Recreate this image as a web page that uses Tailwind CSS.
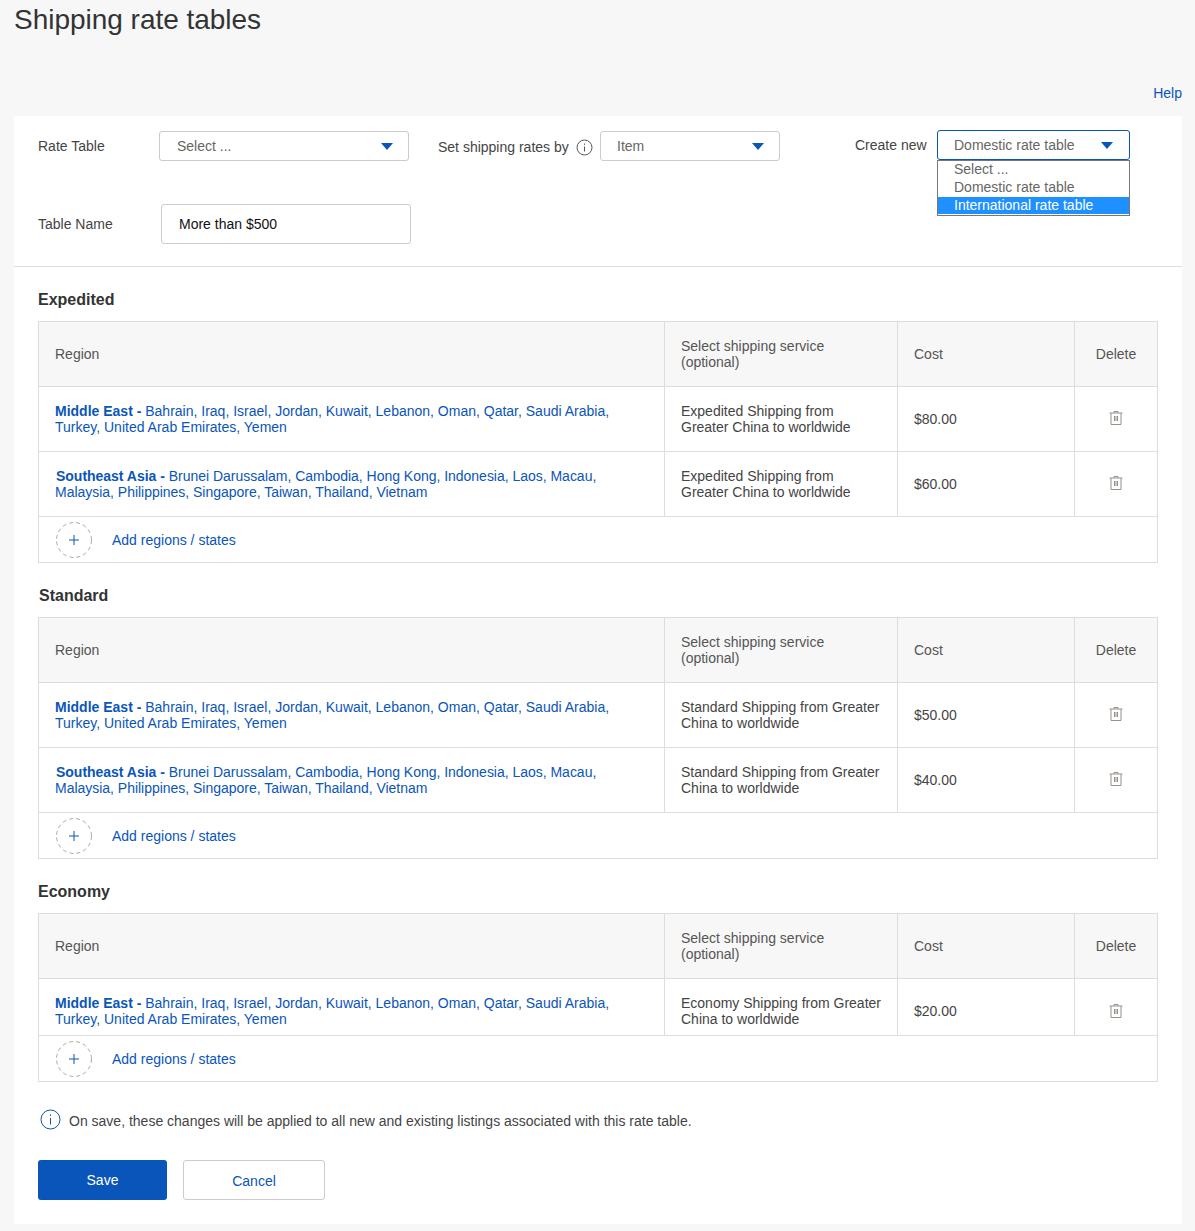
<!DOCTYPE html>
<html lang="en">
<head>
    <meta charset="UTF-8">
    <meta name="viewport" content="width=device-width, initial-scale=1.0">
    <title>Shipping rate tables</title>
    <script src="https://cdn.jsdelivr.net/npm/@tailwindcss/browser@4"></script>
</head>
<body class="bg-[#f7f7f7] font-['Liberation_Sans',Arial,sans-serif] text-[14px] leading-[16px] text-[#444]">
    <div class="h-[1231px] overflow-hidden">
        <h1 class="pl-[14px] pt-[3px] h-[84px] text-[28px] leading-[34px] tracking-[-0.02px] text-[#333]">Shipping rate tables</h1>
        <div class="h-[32px] pr-[13px] pt-[1px] text-right text-[#0a55b9]">Help</div>

        <div class="ml-[14px] mr-[13px] h-[1108px] bg-white">
            <!-- filters -->
            <div class="h-[151px] border-b border-[#ddd] pl-[24px]">
                <div class="relative flex h-[88px] items-start">
                    <span class="mt-[22px] w-[121px]">Rate Table</span>
                    <div class="mt-[15px] flex h-[30px] w-[250px] items-center justify-between rounded-[3px] border border-[#ccc] pl-[17px] pr-[15px] text-[#666]">
                        <span>Select ...</span>
                        <svg width="12" height="7" viewBox="0 0 12 7"><path d="M0 0h12L6 7z" fill="#0a55b9"/></svg>
                    </div>
                    <span class="ml-[29px] mt-[23px] w-[130px] whitespace-nowrap">Set shipping rates by</span>
                    <svg class="ml-[8px] mt-[23px]" width="17" height="17" viewBox="0 0 17 17" fill="none" stroke="#555"><circle cx="8.500" cy="8.500" r="7.500"/><path d="M8.500 7.500v5M8.500 4.500v1.400"/></svg>
                    <div class="ml-[7px] mt-[15px] flex h-[30px] w-[180px] items-center justify-between rounded-[3px] border border-[#ccc] pl-[16px] pr-[15px] text-[#666]">
                        <span>Item</span>
                        <svg width="12" height="7" viewBox="0 0 12 7"><path d="M0 0h12L6 7z" fill="#0a55b9"/></svg>
                    </div>
                    <span class="ml-[75px] mt-[21px] w-[82px]">Create new</span>
                    <div class="relative mt-[14px]">
                        <div class="flex h-[30px] w-[193px] items-center justify-between rounded-[3px] border border-[#0a55b9] pl-[16px] pr-[16px] text-[#666]">
                            <span>Domestic rate table</span>
                            <svg width="12" height="7" viewBox="0 0 12 7"><path d="M0 0h12L6 7z" fill="#0a55b9"/></svg>
                        </div>
                        <div class="absolute left-0 top-[30px] w-[193px] h-[56px] border border-[#767676] bg-white text-[#666]">
                            <div class="h-[18px] pl-[16px]">Select ...</div>
                            <div class="h-[18px] pl-[16px]">Domestic rate table</div>
                            <div class="h-[17px] bg-[#1e90ff] pl-[16px] text-white">International rate table</div>
                        </div>
                    </div>
                </div>
                <div class="flex h-[40px] items-center">
                    <span class="w-[123px]">Table Name</span>
                    <div class="flex h-[40px] w-[250px] items-center rounded-[3px] border border-[#ccc] pl-[17px] text-[#111]">More than $500</div>
                </div>
            </div>

            <!-- Expedited -->
            <section class="pl-[24px] pr-[24px]">
                <h2 class="flex h-[54px] items-end pb-[13px] text-[16px] font-bold text-[#333]">Expedited</h2>
                <div class="border border-[#ddd]">
                    <div class="grid h-[64px] grid-cols-[625px_233px_177px_1fr] bg-[#f7f7f7] text-[#555]">
                        <div class="flex items-center pl-[16px]">Region</div>
                        <div class="flex items-center border-l border-[#ddd] pl-[16px]">Select shipping service<br>(optional)</div>
                        <div class="flex items-center border-l border-[#ddd] pl-[16px]">Cost</div>
                        <div class="flex items-center justify-center border-l border-[#ddd]">Delete</div>
                    </div>
                    <div class="grid h-[65px] grid-cols-[625px_233px_177px_1fr] border-t border-[#ddd]">
                        <div class="flex items-center pl-[16px] text-[#0a55b9]"><p><b>Middle East - </b>Bahrain, Iraq, Israel, Jordan, Kuwait, Lebanon, Oman, Qatar, Saudi Arabia,<br>Turkey, United Arab Emirates, Yemen</p></div>
                        <div class="flex items-center border-l border-[#ddd] pl-[16px]">Expedited Shipping from<br>Greater China to worldwide</div>
                        <div class="flex items-center border-l border-[#ddd] pl-[16px]">$80.00</div>
                        <div class="flex items-center justify-center border-l border-[#ddd] pb-[3px]">
                            <svg width="14" height="15" viewBox="0 0 14 15" fill="none" stroke="#9a9088"><path d="M.5 3h13M2 3v11.500h10V3M5 3V1.500h4V3M5.500 6v5M7 6v5M8.500 6v5"/></svg>
                        </div>
                    </div>
                    <div class="grid h-[65px] grid-cols-[625px_233px_177px_1fr] border-t border-[#ddd]">
                        <div class="flex items-center pl-[16px] text-[#0a55b9]"><p class="tracking-[-0.02px]"><b class="ml-[1px]">Southeast Asia - </b>Brunei Darussalam, Cambodia, Hong Kong, Indonesia, Laos, Macau,<br>Malaysia, Philippines, Singapore, Taiwan, Thailand, Vietnam</p></div>
                        <div class="flex items-center border-l border-[#ddd] pl-[16px]">Expedited Shipping from<br>Greater China to worldwide</div>
                        <div class="flex items-center border-l border-[#ddd] pl-[16px]">$60.00</div>
                        <div class="flex items-center justify-center border-l border-[#ddd] pb-[3px]">
                            <svg width="14" height="15" viewBox="0 0 14 15" fill="none" stroke="#9a9088"><path d="M.5 3h13M2 3v11.500h10V3M5 3V1.500h4V3M5.500 6v5M7 6v5M8.500 6v5"/></svg>
                        </div>
                    </div>
                    <div class="flex h-[46px] items-center border-t border-[#ddd] pl-[16px] text-[#0a55b9]">
                        <svg width="38" height="38" viewBox="0 0 38 38" fill="none"><circle cx="19" cy="19" r="17.500" stroke="#aaa" stroke-dasharray="4 3"/><path d="M19 14v10M14 19h10" stroke="#0a55b9"/></svg>
                        <span class="ml-[19px]">Add regions / states</span>
                    </div>
                </div>
            </section>

            <!-- Standard -->
            <section class="pl-[24px] pr-[24px]">
                <h2 class="flex h-[54px] items-end pb-[13px] pl-[1px] text-[16px] font-bold text-[#333]">Standard</h2>
                <div class="border border-[#ddd]">
                    <div class="grid h-[64px] grid-cols-[625px_233px_177px_1fr] bg-[#f7f7f7] text-[#555]">
                        <div class="flex items-center pl-[16px]">Region</div>
                        <div class="flex items-center border-l border-[#ddd] pl-[16px]">Select shipping service<br>(optional)</div>
                        <div class="flex items-center border-l border-[#ddd] pl-[16px]">Cost</div>
                        <div class="flex items-center justify-center border-l border-[#ddd]">Delete</div>
                    </div>
                    <div class="grid h-[65px] grid-cols-[625px_233px_177px_1fr] border-t border-[#ddd]">
                        <div class="flex items-center pl-[16px] text-[#0a55b9]"><p><b>Middle East - </b>Bahrain, Iraq, Israel, Jordan, Kuwait, Lebanon, Oman, Qatar, Saudi Arabia,<br>Turkey, United Arab Emirates, Yemen</p></div>
                        <div class="flex items-center border-l border-[#ddd] pl-[16px]">Standard Shipping from Greater<br>China to worldwide</div>
                        <div class="flex items-center border-l border-[#ddd] pl-[16px]">$50.00</div>
                        <div class="flex items-center justify-center border-l border-[#ddd] pb-[3px]">
                            <svg width="14" height="15" viewBox="0 0 14 15" fill="none" stroke="#9a9088"><path d="M.5 3h13M2 3v11.500h10V3M5 3V1.500h4V3M5.500 6v5M7 6v5M8.500 6v5"/></svg>
                        </div>
                    </div>
                    <div class="grid h-[65px] grid-cols-[625px_233px_177px_1fr] border-t border-[#ddd]">
                        <div class="flex items-center pl-[16px] text-[#0a55b9]"><p class="tracking-[-0.02px]"><b class="ml-[1px]">Southeast Asia - </b>Brunei Darussalam, Cambodia, Hong Kong, Indonesia, Laos, Macau,<br>Malaysia, Philippines, Singapore, Taiwan, Thailand, Vietnam</p></div>
                        <div class="flex items-center border-l border-[#ddd] pl-[16px]">Standard Shipping from Greater<br>China to worldwide</div>
                        <div class="flex items-center border-l border-[#ddd] pl-[16px]">$40.00</div>
                        <div class="flex items-center justify-center border-l border-[#ddd] pb-[3px]">
                            <svg width="14" height="15" viewBox="0 0 14 15" fill="none" stroke="#9a9088"><path d="M.5 3h13M2 3v11.500h10V3M5 3V1.500h4V3M5.500 6v5M7 6v5M8.500 6v5"/></svg>
                        </div>
                    </div>
                    <div class="flex h-[46px] items-center border-t border-[#ddd] pl-[16px] text-[#0a55b9]">
                        <svg width="38" height="38" viewBox="0 0 38 38" fill="none"><circle cx="19" cy="19" r="17.500" stroke="#aaa" stroke-dasharray="4 3"/><path d="M19 14v10M14 19h10" stroke="#0a55b9"/></svg>
                        <span class="ml-[19px]">Add regions / states</span>
                    </div>
                </div>
            </section>

            <!-- Economy -->
            <section class="pl-[24px] pr-[24px]">
                <h2 class="flex h-[54px] items-end pb-[13px] text-[16px] font-bold text-[#333]">Economy</h2>
                <div class="border border-[#ddd]">
                    <div class="grid h-[64px] grid-cols-[625px_233px_177px_1fr] bg-[#f7f7f7] text-[#555]">
                        <div class="flex items-center pl-[16px]">Region</div>
                        <div class="flex items-center border-l border-[#ddd] pl-[16px]">Select shipping service<br>(optional)</div>
                        <div class="flex items-center border-l border-[#ddd] pl-[16px]">Cost</div>
                        <div class="flex items-center justify-center border-l border-[#ddd]">Delete</div>
                    </div>
                    <div class="grid h-[57px] grid-cols-[625px_233px_177px_1fr] border-t border-[#ddd]">
                        <div class="flex items-center pl-[16px] pt-[8px] text-[#0a55b9]"><p><b>Middle East - </b>Bahrain, Iraq, Israel, Jordan, Kuwait, Lebanon, Oman, Qatar, Saudi Arabia,<br>Turkey, United Arab Emirates, Yemen</p></div>
                        <div class="flex items-center border-l border-[#ddd] pl-[16px] pt-[8px]">Economy Shipping from Greater<br>China to worldwide</div>
                        <div class="flex items-center border-l border-[#ddd] pl-[16px] pt-[8px]">$20.00</div>
                        <div class="flex items-center justify-center border-l border-[#ddd] pt-[6px]">
                            <svg width="14" height="15" viewBox="0 0 14 15" fill="none" stroke="#9a9088"><path d="M.5 3h13M2 3v11.500h10V3M5 3V1.500h4V3M5.500 6v5M7 6v5M8.500 6v5"/></svg>
                        </div>
                    </div>
                    <div class="flex h-[46px] items-center border-t border-[#ddd] pl-[16px] text-[#0a55b9]">
                        <svg width="38" height="38" viewBox="0 0 38 38" fill="none"><circle cx="19" cy="19" r="17.500" stroke="#aaa" stroke-dasharray="4 3"/><path d="M19 14v10M14 19h10" stroke="#0a55b9"/></svg>
                        <span class="ml-[19px]">Add regions / states</span>
                    </div>
                </div>
            </section>

            <div class="ml-[26px] mt-[27px] flex items-center">
                <svg width="21" height="21" viewBox="0 0 21 21" fill="none" stroke="#0a55b9"><circle cx="10.500" cy="10.500" r="9.500"/><path d="M10.500 9v6.500M10.500 5.500v1.600"/></svg>
                <span class="ml-[8px] mt-[2px]">On save, these changes will be applied to all new and existing listings associated with this rate table.</span>
            </div>

            <div class="ml-[24px] mt-[30px] flex gap-[16px]">
                <button class="h-[40px] w-[129px] rounded-[3px] bg-[#0a55b9] text-white pb-[1px]">Save</button>
                <button class="h-[40px] w-[142px] rounded-[3px] border border-[#ccc] bg-white text-[#0a55b9] pt-[1px]">Cancel</button>
            </div>
        </div>
    </div>
</body>
</html>
